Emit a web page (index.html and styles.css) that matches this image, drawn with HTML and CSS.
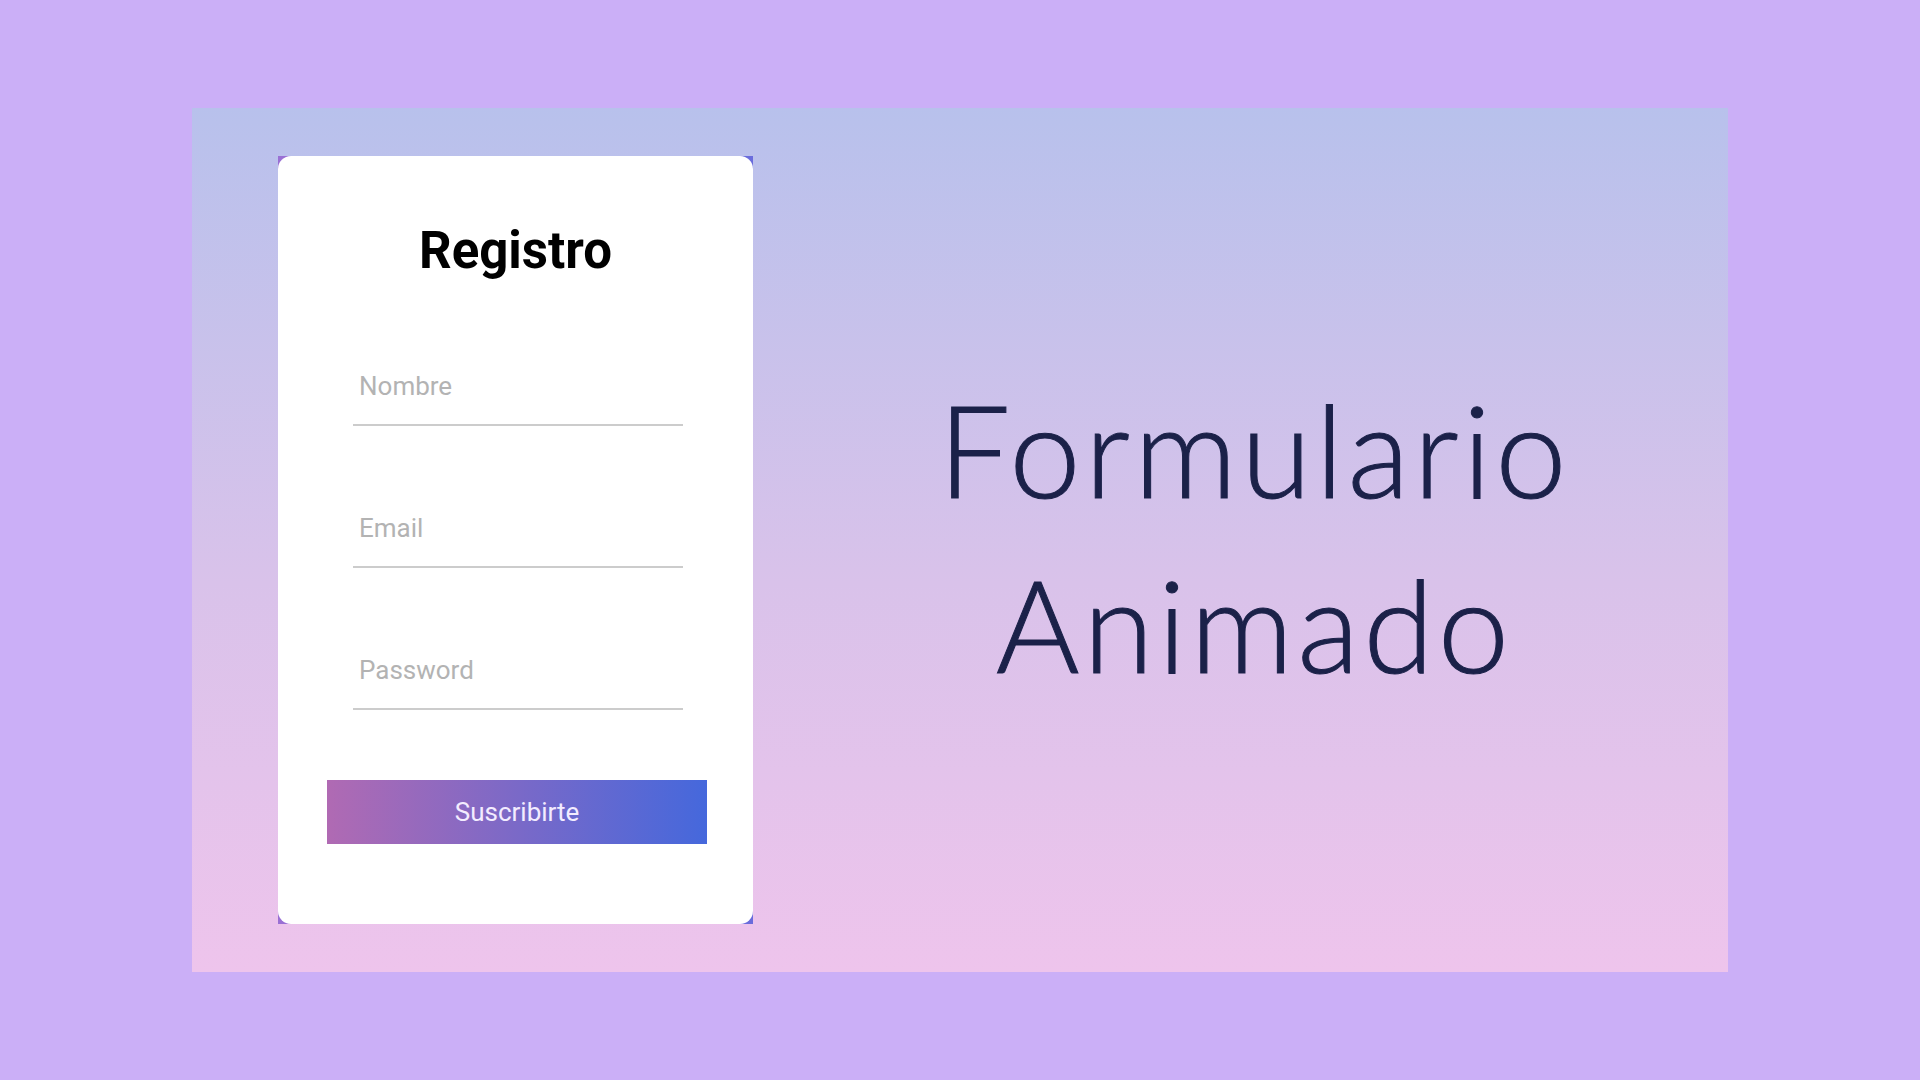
FILE: index.html
```html
<!DOCTYPE html>
<html lang="es">
<head>
<meta charset="utf-8">
<title>Formulario Animado</title>
<link rel="stylesheet" href="styles.css">
</head>
<body>
<div class="stage">
  <div class="panel">
    <div class="card-frame">
      <form class="card">
        <h2 class="title">Registro</h2>
        <input class="field" type="text" placeholder="Nombre">
        <input class="field" type="email" placeholder="Email">
        <input class="field" type="password" placeholder="Password">
        <button class="submit" type="button">Suscribirte</button>
      </form>
    </div>
    <div class="hero">
      <h1 class="hero-title">Formulario<br>Animado</h1>
    </div>
  </div>
</div>
</body>
</html>
```
FILE: styles.css
```css
html, body {
  margin: 0;
  padding: 0;
}
body {
  background: #cbaff7;
  width: 1920px;
  height: 1080px;
  overflow: hidden;
}
.stage {
  padding: 108px 192px 108px 192px;
}
.panel {
  height: 864px;
  display: flex;
  align-items: center;
  padding-left: 86px;
  background: linear-gradient(180deg, #b8c1ec 0%, #d9c2ea 55%, #eec4ec 100%);
}
.card-frame {
  width: 475px;
  height: 768px;
  flex: none;
  background: linear-gradient(90deg, #9a70d4 0%, #6a6cdc 100%);
}
.card {
  box-sizing: border-box;
  height: 100%;
  background: #fff;
  border-radius: 13px;
  display: flex;
  flex-direction: column;
  align-items: center;
  padding: 69px 0 0 0;
  margin: 0;
}
.title {
  margin: 0 0 85px;
  font-family: Roboto, "Liberation Sans", sans-serif;
  font-weight: 700;
  font-size: 51px;
  line-height: 1;
  color: #000;
}
.field {
  box-sizing: border-box;
  width: 330px;
  height: 65px;
  margin: 0 0 77px 5px;
  padding: 0 4px 13px 6px;
  border: none;
  border-bottom: 2px solid #cccccc;
  outline: none;
  background: transparent;
  font-family: Roboto, "Liberation Sans", sans-serif;
  font-size: 26px;
  color: #333;
}
.field:last-of-type {
  margin-bottom: 70px;
}
.field::placeholder {
  color: #b3b3b3;
}
.submit {
  width: 380px;
  height: 64px;
  border: none;
  margin: 0 0 0 3px;
  padding: 0;
  background: linear-gradient(90deg, #b06ab3 0%, #4568dc 100%);
  font-family: Roboto, "Liberation Sans", sans-serif;
  font-size: 26px;
  color: #f3ecff;
}
.hero {
  flex: 1;
  display: flex;
  justify-content: center;
  padding-left: 28px;
  padding-bottom: 8px;
}
.hero-title {
  margin: 0;
  font-family: Lato, "Open Sans", sans-serif;
  font-weight: 300;
  font-size: 128px;
  line-height: 175px;
  letter-spacing: 4px;
  -webkit-text-stroke: 1px #1b2149;
  text-align: center;
  color: #1b2149;
}
```
